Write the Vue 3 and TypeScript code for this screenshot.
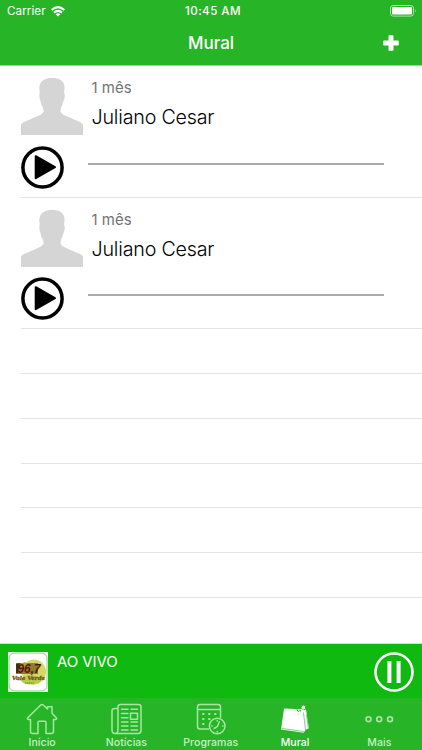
<script setup lang="ts">
interface Post {
  id: number
  age: string
  author: string
}

const posts: Post[] = [
  { id: 1, age: '1 mês', author: 'Juliano Cesar' },
  { id: 2, age: '1 mês', author: 'Juliano Cesar' },
]
const emptyRows = 7
const tabs: { id: string; label: string }[] = [
  { id: 'home', label: 'Início' },
  { id: 'news', label: 'Notícias' },
  { id: 'shows', label: 'Programas' },
  { id: 'wall', label: 'Mural' },
  { id: 'more', label: 'Mais' },
]
const activeTab = 'wall'
</script>

<template>
  <div class="screen">
    <header class="top">
      <div class="status">
        <div class="carrier">
          <span>Carrier</span>
          <svg class="wifi" width="14" height="11" viewBox="0 0 14 11">
            <g fill="none" stroke="#fff" stroke-width="2.1">
              <path d="M.7 4.1Q7-1.7 13.3 4.1" />
              <path d="M2.9 6.7Q7 2.900 11.1 6.7" />
            </g>
            <path d="M4.600 8.200Q7 6.200 9.400 8.200L7 10.600Z" fill="#fff" />
          </svg>
        </div>
        <span class="clock">10:45 AM</span>
        <svg class="battery" width="27" height="12" viewBox="0 0 27 12">
          <rect x=".5" y=".5" width="23" height="10.6" rx="2.6" fill="none" stroke="#fff" stroke-opacity=".6" />
          <rect x="2" y="2" width="20" height="7.6" rx="1" fill="#fff" />
          <path d="M25 4q1.6 1.8 0 3.6z" fill="#fff" fill-opacity=".6" />
        </svg>
      </div>
      <div class="nav">
        <h1>Mural</h1>
        <svg class="add" width="18" height="18" viewBox="0 0 18 18">
          <path d="M7.300 1.200h3.400q.8 0 .8.800v4.500H16q.8 0 .8.800v3.400q0 .8-.8.800h-4.500V16q0 .8-.8.800H7.300q-.8 0-.8-.8v-4.500H2q-.8 0-.8-.8V7.300q0-.8.8-.8h4.500V2q0-.8.8-.8Z" fill="#fff" />
        </svg>
      </div>
    </header>

    <main class="list">
      <article v-for="post in posts" :key="post.id" class="post">
        <div class="head">
          <svg class="avatar" width="62" height="57" viewBox="0 0 62 57">
            <path
              fill="#d5d5d5"
              d="M0 57V47Q0 45.500 2 44.500L18 37.500Q21.500 36 22.700 33.500L22 29.500Q20 27.500 19.800 24L18.700 21Q18 16 18.700 15L18.300 9Q19 3 24 1.200Q31 -1.500 38.500 1.200Q43.800 4 43.500 10L43.100 15Q44.200 16.500 43.500 20Q42.700 23.500 42 24Q41.700 27.500 40 29.500L39.500 33.500Q40.500 36 44 37.500L60 44.500Q62 45.500 62 47V57Z"
            />
          </svg>
          <div class="meta">
            <span class="age">{{ post.age }}</span>
            <span class="author">{{ post.author }}</span>
          </div>
        </div>
        <div class="audio">
          <svg class="play" width="43" height="43" viewBox="0 0 43 43">
            <circle cx="21.500" cy="21.500" r="19.600" fill="none" stroke="#000" stroke-width="3.500" />
            <path d="M14.700 10.200v22L34 21.200Z" fill="#000" stroke="#000" stroke-width="2" stroke-linejoin="round" />
          </svg>
          <div class="track"></div>
        </div>
      </article>
      <div v-for="n in emptyRows" :key="n" class="empty"></div>
    </main>

    <section class="player">
      <svg class="cover" width="40" height="40" viewBox="0 0 40 40">
        <rect width="40" height="40" fill="#fff" />
        <rect x="1" y="1" width="38" height="38" rx="5.500" fill="#fff" stroke="#55cb52" stroke-width=".8" />
        <ellipse cx="26" cy="20" rx="12" ry="12.500" fill="#d4da61" />
        <ellipse cx="23" cy="28" rx="10" ry="4.500" fill="#b9cd49" />
        <path d="M8 11h22v11H8z" fill="#8b802c" />
        <path d="M17 10l4 3-5 4-6-4z" fill="#b0a53b" />
        <path d="M8 12l4-1-2 10H8z" fill="#3f3212" />
        <text x="9.500" y="20.700" textLength="23" lengthAdjust="spacingAndGlyphs" class="logo-number">96,7</text>
        <text x="3.800" y="28.400" textLength="33" lengthAdjust="spacingAndGlyphs" class="logo-name">Vale Verde</text>
        <path d="M17 31h9" stroke="#708d24" stroke-width="1" stroke-dasharray="1.500 .5" />
      </svg>
      <span class="live">AO VIVO</span>
      <svg class="pause" width="40" height="40" viewBox="0 0 40 40">
        <circle cx="20" cy="20" r="18.500" fill="none" stroke="#fff" stroke-width="2.600" />
        <path d="M13.400 9h4v22h-4zM22.600 9h4v22h-4z" fill="#fff" />
      </svg>
    </section>

    <nav class="tabs">
      <div v-for="tab in tabs" :key="tab.id" class="tab" :class="{ active: tab.id === activeTab }">
        <svg v-if="tab.id === 'home'" class="icon" width="34" height="32" viewBox="0 0 34 32">
          <path d="M5.500 16.500H3.200Q1.500 16 3 14.500L16 1.800Q17 1 18 1.800L22.500 6V3.700H27V10.300L31 14.500Q32.400 16 30.800 16.500H28.500V28.500Q28.500 30.500 26.500 30.500H21V19.500Q21 18.300 20 18.300H14Q13 18.300 13 19.500V30.500H7.500Q5.500 30.500 5.500 28.500Z" />
        </svg>
        <svg v-else-if="tab.id === 'news'" class="icon" width="34" height="32" viewBox="0 0 34 32">
          <path d="M8.500 5.500H5.500Q3 5.500 3 8V27Q3 30.500 6 30.500H29Q32 30.500 32 27.500V4Q32 1.500 29.500 1.500H11.500Q9 1.500 9 4V27Q9 30.500 6 30.500" />
          <path d="M12.500 6.200h6.500M22 6.200h6.500M12.500 10.500h6.500M12.500 14.700h6.500M12.500 19h6.500M22 19h6.500M12.500 23h6.500M22 23h6.500M12.500 27h6.500M22 27h6.500M21.500 10.200h7v6h-7z" />
        </svg>
        <svg v-else-if="tab.id === 'shows'" class="icon" width="34" height="32" viewBox="0 0 34 32">
          <path d="M14.500 26H6Q3.500 26 3.500 23.500V4Q3.500 1.500 6 1.500H24Q26.500 1.500 26.500 4V14.500M3.500 6.500h23" />
          <path class="dots" d="M9 11h.6M15 11h.6M21 11h.6M9 16h.6M15 16h.6M9 21h.6" />
          <circle cx="23.200" cy="23" r="7.800" />
          <path d="M25.300 18.700l-2 5-3.300 1.800M23.200 17.500v.4M23.200 28.500v.4M17.800 23h.4M28.500 23h.4" />
        </svg>
        <svg v-else-if="tab.id === 'wall'" class="icon" width="34" height="32" viewBox="0 0 34 32">
          <path d="M6 5.500L28 6.500 31 25.500 28 26.500 25.500 29.800 3 26.500Z" fill="#fff" stroke="none" />
          <path d="M25.500 10L27.500 26.500M28.500 12l2 14M4 25.500l21.500 3" stroke="#28b427" stroke-width=".6" />
          <path d="M18.500 5.500l1.500 3 3-1.500v3l-2.500 1.500" stroke="#28b427" stroke-width=".9" />
          <circle cx="25.500" cy="4.500" r="2.300" fill="#fff" stroke="#28b427" stroke-width=".7" />
          <path d="M23 6.500l4 2.500M24.500 8l-3.500 3.500" stroke="#fff" stroke-width="1.300" />
        </svg>
        <svg v-else class="icon" width="34" height="32" viewBox="0 0 34 32">
          <g stroke-width="1.700"><circle cx="6.500" cy="16.200" r="2.450" /><circle cx="17.200" cy="16.200" r="2.450" /><circle cx="28" cy="16.200" r="2.450" /></g>
        </svg>
        <span class="label">{{ tab.label }}</span>
      </div>
    </nav>
  </div>
</template>

<style>
body { margin: 0; background: #fff; }
</style>

<style scoped>
.screen {
  width: 422px;
  height: 750px;
  display: flex;
  flex-direction: column;
  overflow: hidden;
  background: #fff;
  font-family: Inter, "Liberation Sans", sans-serif;
}
.top { flex: none; height: 65px; background: #28b427; background-clip: padding-box; border-bottom: 1px solid #90df90; color: #fff; }
.status {
  height: 22px;
  display: grid;
  grid-template-columns: 1fr auto 1fr;
  align-items: center;
  padding: 0 5px 0 7px;
  font-size: 11.7px;
}
.carrier { display: flex; align-items: center; gap: 5px; letter-spacing: 0.05px; }
.clock { font-weight: 500; font-size: 11.6px; letter-spacing: 0.45px; padding-left: 2px; }
.battery { justify-self: end; margin-top: -1px; }
.nav { height: 42px; display: grid; grid-template-columns: 1fr auto 1fr; align-items: center; padding: 0 22px; }
h1 { grid-column: 2; margin: 0; font-size: 17px; line-height: 22px; font-weight: 500; letter-spacing: 0; }
.add { justify-self: end; }
.list { flex: 1; min-height: 0; overflow: hidden; padding-left: 21px; }
.post { box-sizing: border-box; height: 131.6px; padding-top: 12px; border-bottom: 1px solid #e3e3e5; }
.head { display: flex; height: 57px; gap: 8.5px; }
.meta { display: flex; flex-direction: column; }
.age { font-size: 15px; line-height: 20px; color: #727277; letter-spacing: 0; }
.author { margin-top: 6px; font-size: 19.7px; line-height: 26px; font-weight: 300; color: #000; letter-spacing: -0.2px; white-space: nowrap; }
.audio { display: flex; align-items: flex-start; gap: 24.2px; margin-top: 10.5px; }
.play { margin-left: -0.2px; }
.track { width: 296px; height: 2px; margin-top: 17px; background: #aaa; }
.empty { box-sizing: border-box; height: 44.8px; border-bottom: 1px solid #e3e3e5; }
.empty:last-child { border-bottom: 0; }
.player {
  flex: none;
  box-sizing: border-box;
  height: 54px;
  padding: 8px 8px 0;
  display: flex;
  align-items: flex-start;
  background: #10b910;
  box-shadow: 0 -1px 1px #0002;
}
.logo-number { font: italic 700 12px "Liberation Sans", sans-serif; fill: #4a150c; stroke: #b8341f; stroke-width: 0.2px; }
.logo-name { font: italic 700 6px "Liberation Serif", serif; fill: #8e3a13; stroke: #6d6b20; stroke-width: 0.3px; }
.live { margin-left: 9px; margin-top: 0.5px; color: #fff; font-size: 15px; line-height: 18px; letter-spacing: -0.1px; }
.pause { margin-left: auto; }
.tabs {
  flex: none;
  height: 52px;
  display: grid;
  grid-template-columns: repeat(5, 84.3px);
  background: #28b427;
  color: #c3f1c2;
}
.tab { display: flex; flex-direction: column; align-items: center; padding-top: 5px; }
.icon { fill: none; stroke: #a5e7a2; stroke-width: 1.5; stroke-linecap: round; stroke-linejoin: round; }
.dots { stroke-width: 2; }
.label { margin-top: 1px; font-size: 10.5px; line-height: 14px; font-weight: 500; letter-spacing: 0.05px; }
.active { color: #fff; }
</style>
